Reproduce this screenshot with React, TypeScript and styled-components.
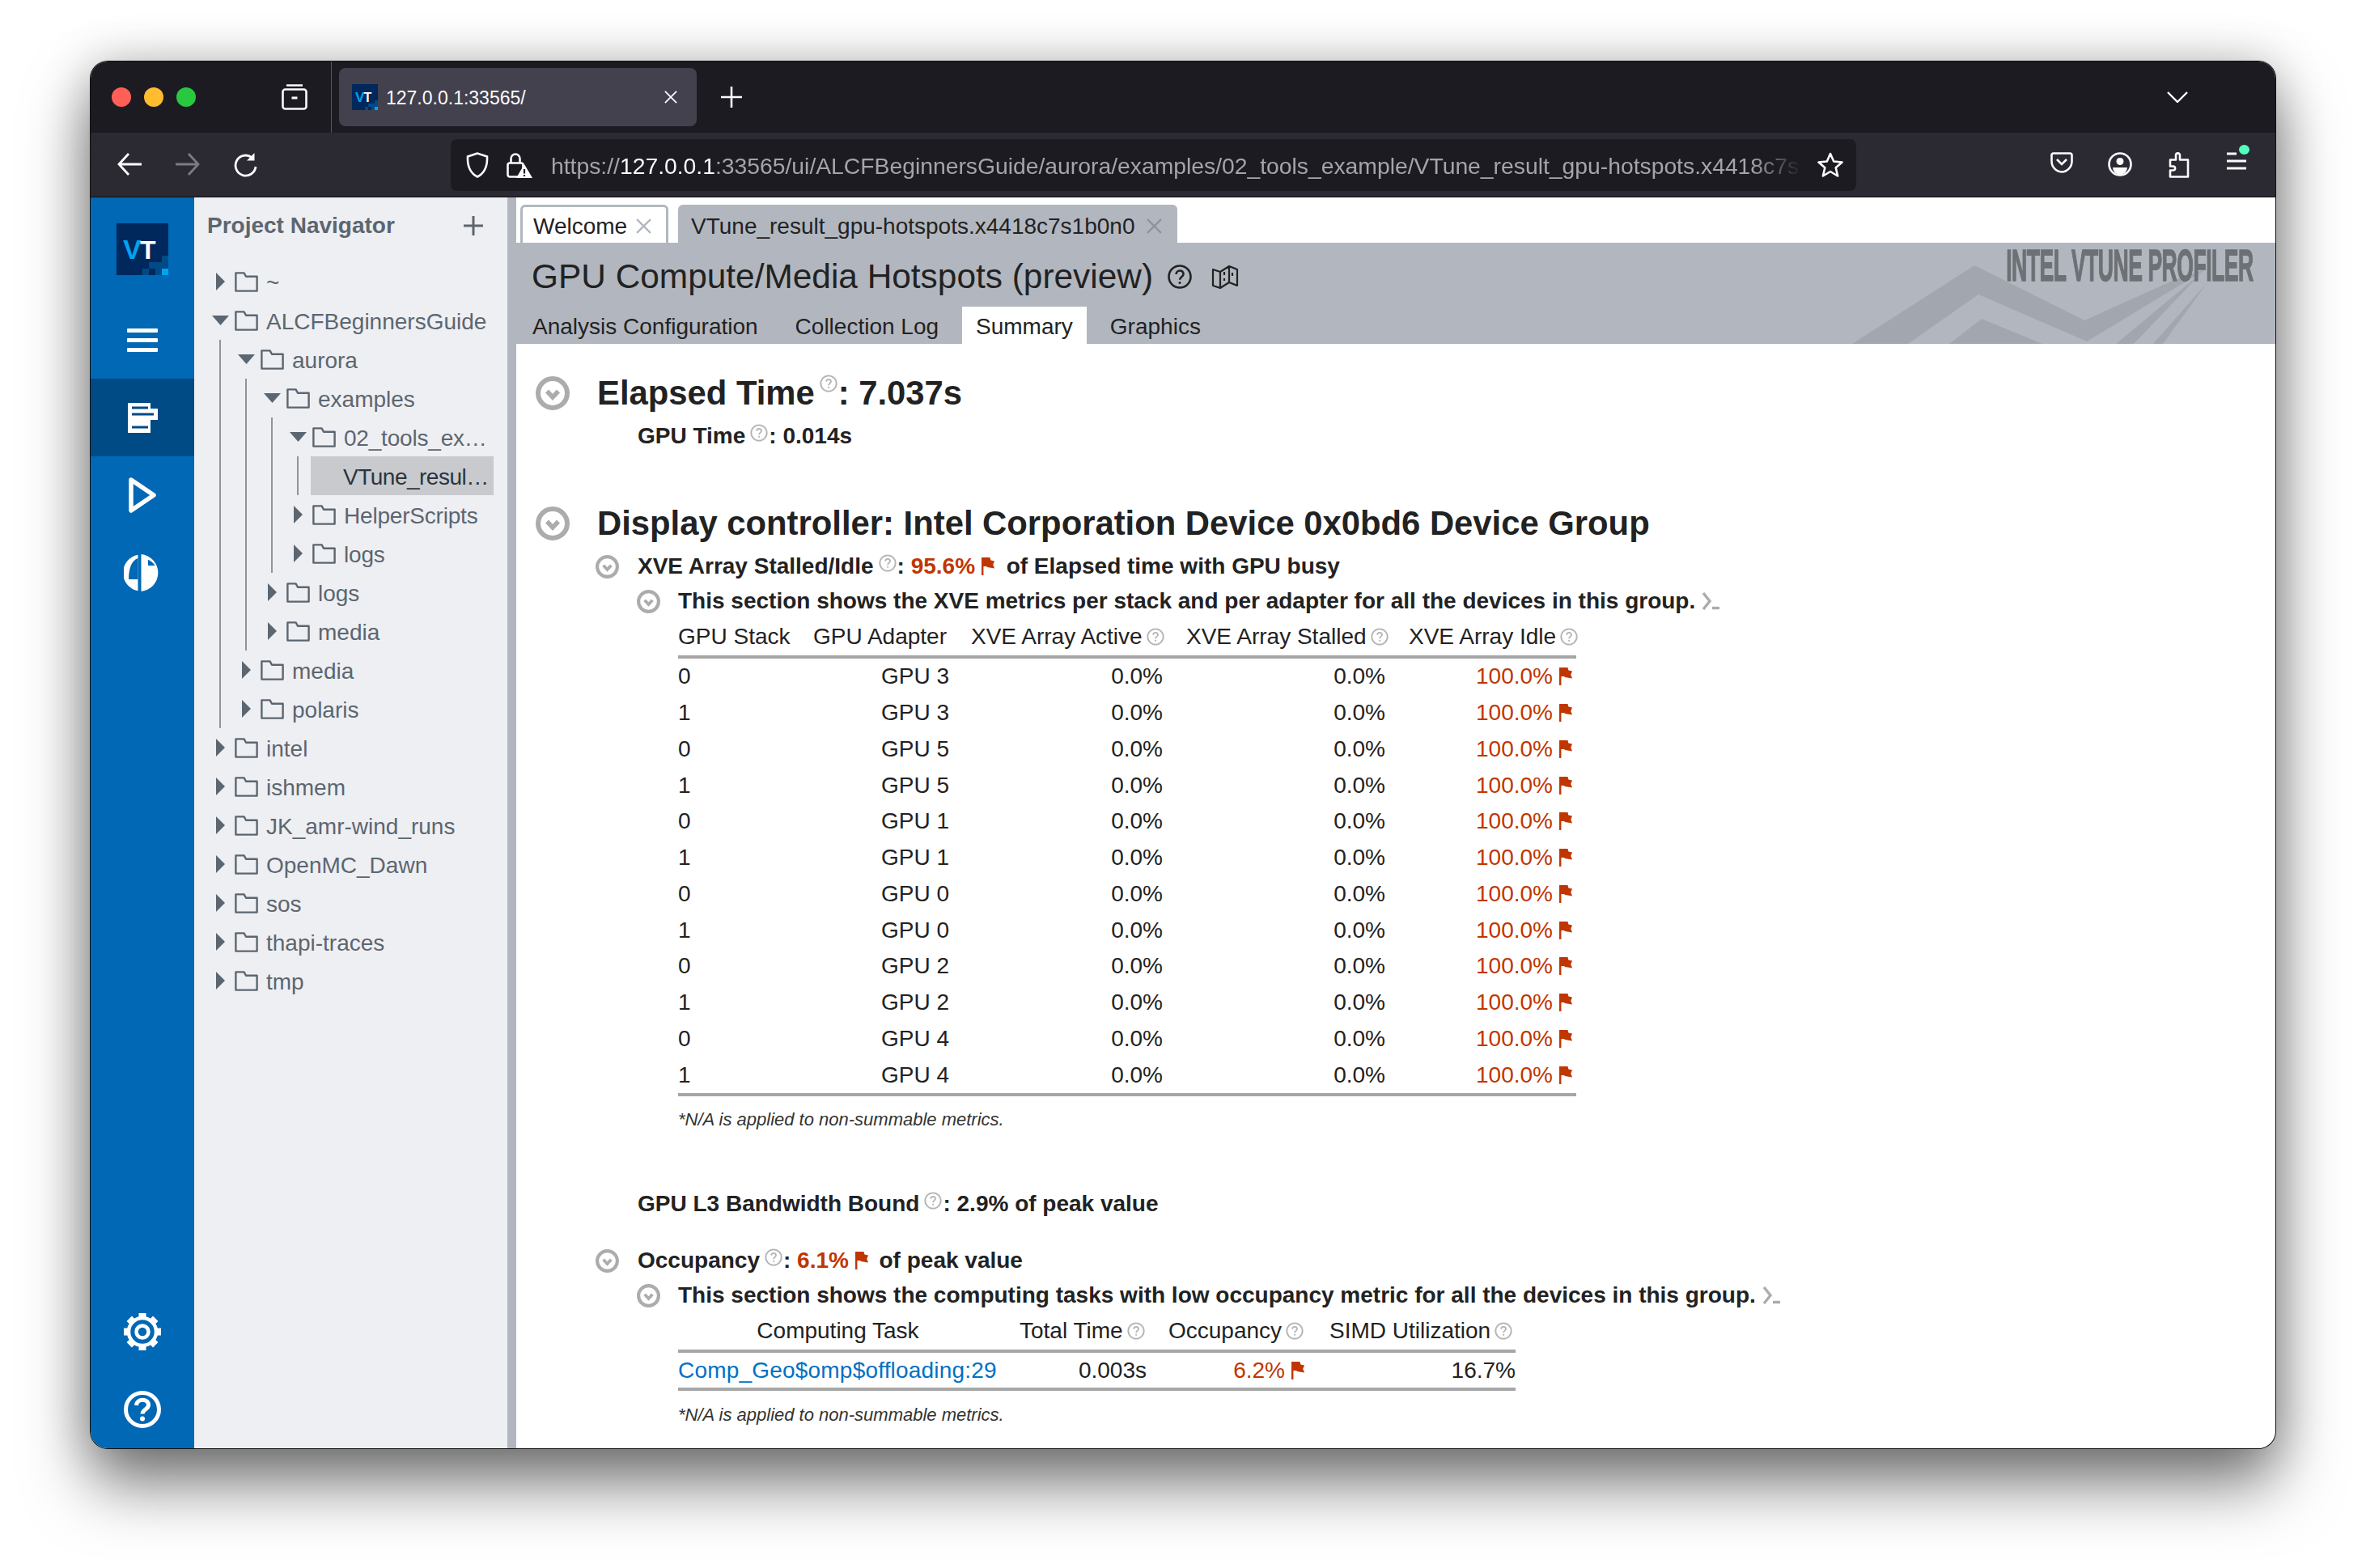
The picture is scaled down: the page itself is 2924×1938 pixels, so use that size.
import React from 'react';
import styled, { createGlobalStyle } from 'styled-components';

const Global = createGlobalStyle`
  html, body { margin: 0; padding: 0; background: #fff; }
  body { font-family: "Liberation Sans", Arial, sans-serif; color: #222; }
  * { box-sizing: border-box; }
`;

const Page = styled.div`
  width: 2924px;
  height: 1938px;
  padding: 76px 112px 148px;
  overflow: hidden;
`;

const Browser = styled.div`
  width: 2700px;
  height: 1714px;
  border-radius: 21px;
  overflow: hidden;
  display: flex;
  flex-direction: column;
  background: #fff;
  box-shadow: 0 0 0 1px #111, 0 44px 80px rgba(0, 0, 0, 0.52), 0 0 60px rgba(0, 0, 0, 0.22);
`;

/* ---------- browser chrome ---------- */
const TitleBar = styled.div`
  height: 88px;
  flex: none;
  background: #1c1b22;
  display: flex;
  align-items: center;
  padding-left: 26px;
`;

const Light = styled.span<{ $c: string }>`
  width: 24px;
  height: 24px;
  border-radius: 50%;
  background: ${p => p.$c};
  margin-right: 16px;
  flex: none;
`;

const ViewBtn = styled.div`
  width: 32px;
  margin-left: 90px;
  display: flex;
  flex: none;
`;

const TabDivider = styled.div`
  width: 1px;
  height: 88px;
  background: #55545c;
  margin-left: 29px;
`;

const BrowserTab = styled.div`
  width: 442px;
  height: 72px;
  margin-left: 9px;
  border-radius: 8px;
  background: #42414d;
  color: #fbfbfe;
  font-size: 23px;
  display: flex;
  align-items: center;
  padding-left: 16px;
  gap: 10px;
`;

const TabUrl = styled.span`
  flex: 1;
  padding-top: 2px;
`;

const CloseWrap = styled.span`
  display: flex;
  margin-right: 24px;
`;

const NewTab = styled.div`
  display: flex;
  margin-left: 30px;
`;

const Spacer = styled.div`
  flex: 1;
`;

const ListTabs = styled.div`
  display: flex;
  margin-right: 108px;
`;

const ToolBar = styled.div`
  height: 80px;
  flex: none;
  background: #2b2a33;
  border-bottom: 1px solid #0c0c0d;
  padding-top: 1px;
  display: flex;
  align-items: center;
  position: relative;
`;

const NavIcon = styled.div`
  width: 72px;
  display: flex;
  justify-content: center;
  flex: none;
`;

const NavIcons = styled.div`
  display: flex;
  margin-left: 12px;
`;

const UrlBar = styled.div`
  width: 1737px;
  height: 64px;
  margin-left: 217px;
  border-radius: 8px;
  background: #1c1b22;
  display: flex;
  align-items: center;
  padding-left: 19px;
  position: relative;
`;

const UrlIcon = styled.div<{ $mr: number }>`
  display: flex;
  margin-right: ${p => p.$mr}px;
  flex: none;
`;

const UrlText = styled.div`
  width: 1546px;
  overflow: hidden;
  white-space: nowrap;
  font-size: 28.3px;
  padding-top: 3px;
  color: #a5a4ab;
  -webkit-mask-image: linear-gradient(90deg, #000 96%, transparent 100%);
  mask-image: linear-gradient(90deg, #000 96%, transparent 100%);
  b {
    color: #fbfbfe;
    font-weight: 400;
  }
`;

const StarWrap = styled.div`
  display: flex;
  margin-left: 19px;
`;

const RightIcons = styled.div`
  display: flex;
  margin-left: 218px;
`;

const RightIcon = styled.div`
  width: 72px;
  display: flex;
  justify-content: center;
  position: relative;
`;

const UpdateDot = styled.span`
  position: absolute;
  right: 20px;
  top: -9px;
  width: 13px;
  height: 12px;
  border-radius: 50%;
  background: #54ffbd;
`;

/* ---------- app ---------- */
const AppBody = styled.div`
  flex: 1;
  display: flex;
  min-height: 0;
`;

const Rail = styled.div`
  width: 128px;
  flex: none;
  background: #0068b5;
  display: flex;
  flex-direction: column;
  padding-top: 32px;
`;

const RailLogo = styled.div`
  height: 96px;
  display: flex;
  justify-content: center;
`;

const RailBtn = styled.div<{ $active?: boolean }>`
  height: 96px;
  display: flex;
  align-items: center;
  justify-content: center;
  background: ${p => (p.$active ? '#004a86' : 'transparent')};
`;

const RailSpace = styled.div`
  flex: 1;
`;

const Navigator = styled.div`
  width: 387px;
  flex: none;
  background: #eeeff3;
  padding-left: 18px;
`;

const NavHead = styled.div`
  height: 80px;
  margin-left: -2px;
  display: flex;
  align-items: center;
  justify-content: space-between;
  padding: 3px 29px 14px 0;
  font-size: 28px;
  font-weight: 700;
  color: #5c6670;
`;

const TreeKids = styled.div`
  margin-left: 13px;
  padding-left: 17px;
  border-left: 2px solid #8e959c;
`;

const TreeRow = styled.div`
  height: 48px;
  display: flex;
  align-items: center;
  font-size: 28px;
  color: #5c6670;
  white-space: nowrap;
`;

const Arrow = styled.span`
  width: 32px;
  flex: none;
  display: flex;
  justify-content: center;
  padding-right: 4px;
`;

const FolderWrap = styled.span`
  display: flex;
  margin-right: 10px;
  flex: none;
`;

const TreeLabel = styled.span`
  width: 182px;
  padding-top: 3px;
  overflow: hidden;
  text-overflow: ellipsis;
  letter-spacing: -0.2px;
  flex: none;
`;

const PlainLabel = styled.span`
  flex: none;
  padding-top: 3px;
`;

const FileRow = styled.div`
  height: 48px;
  width: 226px;
  margin-left: -2px;
  padding-left: 40px;
  display: flex;
  align-items: center;
  font-size: 28px;
  background: #c8cace;
  color: #2b3440;
  white-space: nowrap;
  overflow: hidden;
`;

const FileLabel = styled.span`
  width: 184px;
  padding-top: 3px;
  overflow: hidden;
  text-overflow: ellipsis;
  letter-spacing: -0.5px;
`;

const Gutter = styled.div`
  width: 11px;
  flex: none;
  background: #b2b7bf;
`;

const Main = styled.div`
  flex: 1;
  min-width: 0;
  display: flex;
  flex-direction: column;
`;

const DocTabs = styled.div`
  height: 56px;
  flex: none;
  display: flex;
  padding: 9px 0 0 5px;
  gap: 12px;
`;

const DocTab = styled.div<{ $on?: boolean; $w: number; $pr: number }>`
  width: ${p => p.$w}px;
  height: 47px;
  border: 3px solid #b2b7bf;
  border-bottom: 0;
  border-radius: 6px 6px 0 0;
  background: ${p => (p.$on ? '#fff' : '#b2b7bf')};
  font-size: 28px;
  color: #222;
  display: flex;
  align-items: center;
  justify-content: space-between;
  padding: 3px ${p => p.$pr}px 0 13px;
  white-space: nowrap;
`;

const Head = styled.div`
  height: 125px;
  flex: none;
  background: #b2b7bf;
  position: relative;
  display: flex;
  flex-direction: column;
  overflow: hidden;
`;

const HeadTitle = styled.div`
  height: 79px;
  display: flex;
  align-items: center;
  padding: 5px 0 0 19px;
  font-size: 42.4px;
  color: #222;
  position: relative;
`;

const HeadIcon = styled.span<{ $ml: number }>`
  display: flex;
  margin-left: ${p => p.$ml}px;
`;

const SubTabs = styled.div`
  flex: 1;
  display: flex;
  padding-left: 3px;
  gap: 12px;
  position: relative;
`;

const SubTab = styled.div<{ $on?: boolean }>`
  padding: 4px 17px 0;
  font-size: 28px;
  color: #222;
  display: flex;
  align-items: center;
  background: ${p => (p.$on ? '#fff' : 'transparent')};
`;

const HeadArt = styled.svg`
  position: absolute;
  right: 73px;
  bottom: 0;
`;

const Brand = styled.div`
  position: absolute;
  right: 27px;
  top: 0;
  font-size: 56px;
  line-height: 56px;
  font-weight: 700;
  letter-spacing: -1px;
  color: #6d7175;
  white-space: nowrap;
  transform: scaleX(0.474);
  transform-origin: right center;
  -webkit-text-stroke: 1.5px #6d7175;
`;

const Report = styled.div`
  flex: 1;
  min-height: 0;
  padding: 31px 0 0 24px;
  overflow: hidden;
`;

const Row = styled.div<{ $h: number; $mt?: number; $ml?: number }>`
  height: ${p => p.$h}px;
  margin-top: ${p => p.$mt || 0}px;
  margin-left: ${p => p.$ml || 0}px;
  display: flex;
  align-items: center;
  white-space: pre;
`;

const Toggle = styled.span<{ $w: number }>`
  width: ${p => p.$w}px;
  flex: none;
  display: flex;
`;

const BigText = styled.span`
  font-size: 41.8px;
  font-weight: 700;
  color: #222;
`;

const BoldText = styled.span`
  font-size: 28px;
  font-weight: 700;
  color: #222;
  display: flex;
  align-items: center;
`;

const Sup = styled.span<{ $up?: number; $ml?: number }>`
  display: inline-flex;
  margin: 0 1px 0 ${p => p.$ml ?? 6}px;
  transform: translateY(${p => -(p.$up || 0)}px);
`;

const Red = styled.span`
  color: #c03600;
`;

const FlagWrap = styled.span<{ $ml?: number; $mr?: number }>`
  display: inline-flex;
  margin-left: ${p => p.$ml ?? 8}px;
  margin-right: ${p => p.$mr ?? 0}px;
`;

const Grid = styled.div<{ $cols: string; $ml: number }>`
  display: grid;
  grid-template-columns: ${p => p.$cols};
  column-gap: 27px;
  margin-left: ${p => p.$ml}px;
  font-size: 28px;
  color: #222;
`;

const HeadRow = styled(Grid)<{ $w: number }>`
  width: ${p => p.$w}px;
  height: 47px;
  align-items: center;
  white-space: nowrap;
`;

const Rule = styled.div<{ $w: number; $ml: number }>`
  width: ${p => p.$w}px;
  height: 4px;
  margin-left: ${p => p.$ml}px;
  background: #a6a6a6;
`;

const BodyRow = styled(Grid)<{ $w: number; $h: number }>`
  width: ${p => p.$w}px;
  height: ${p => p.$h}px;
  align-items: center;
  white-space: nowrap;
`;

const Cell = styled.div<{ $a?: string; $red?: boolean; $pr?: number }>`
  display: flex;
  align-items: center;
  justify-content: ${p => (p.$a === 'r' ? 'flex-end' : p.$a === 'c' ? 'center' : 'flex-start')};
  color: ${p => (p.$red ? '#c03600' : 'inherit')};
  padding-right: ${p => p.$pr || 0}px;
`;

const TaskLink = styled.span`
  color: #0071c5;
  letter-spacing: 0.2px;
`;

const Note = styled.div<{ $mt: number }>`
  height: 30px;
  margin: ${p => p.$mt}px 0 0 176px;
  font-size: 22px;
  font-style: italic;
  color: #333;
  display: flex;
  align-items: center;
`;

/* ---------- drawings ---------- */
const CloseX = ({ s = 18, c = '#fbfbfe', w = 2 }: { s?: number; c?: string; w?: number }) => (
  <svg width={s} height={s} viewBox="0 0 18 18" fill="none" stroke={c} strokeWidth={w}>
    <path d="M1 1l16 16M17 1L1 17" />
  </svg>
);

const Help = ({ s = 22 }: { s?: number }) => (
  <svg width={s} height={s} viewBox="0 0 20 20" fill="none" stroke="#b4b4b4" strokeWidth="1.7">
    <circle cx="10" cy="10" r="8.8" />
    <path d="M7.4 7.8c.2-3.3 5.3-3.3 5.3-.1 0 2-2.6 2-2.6 4.4" />
    <circle cx="10.1" cy="14.4" r="1" fill="#b4b4b4" stroke="none" />
  </svg>
);

const Collapse = ({ s }: { s: number }) => (
  <svg width={s} height={s} viewBox="0 0 42 42" fill="none">
    <circle cx="21" cy="21" r="18" stroke="#acacac" strokeWidth="6" />
    <path d="M14 18.500l7 7.500 7-7.500" stroke="#acacac" strokeWidth="5.500" />
  </svg>
);

const Flag = ({ s = 22 }: { s?: number }) => (
  <svg width={s * 0.73} height={s} viewBox="0 0 16 22">
    <path d="M0 0h2.400v22H0zM2.400 0h8l1 3.400L16 4.400 14.200 9l1.800 4.400-9-1.400-1-1H2.400z" fill="#c03600" />
  </svg>
);

const Prompt = () => (
  <svg width="22" height="22" viewBox="0 0 22 22" fill="none">
    <path d="M2 1l8 10-8 10" stroke="#acacac" strokeWidth="3.400" />
    <path d="M13 19.500h9" stroke="#acacac" strokeWidth="3.400" />
  </svg>
);

const Folder = () => (
  <svg width="29" height="25" viewBox="0 0 29 25" fill="none" stroke="#5c6670" strokeWidth="2.400">
    <path d="M1.400 23.600V1.400h10.200l2.400 4.400h13.600v17.800z" strokeLinejoin="round" />
  </svg>
);

const TriRight = () => (
  <svg width="11" height="22" viewBox="0 0 11 22">
    <path d="M0 0l11 11L0 22z" fill="#5c6670" />
  </svg>
);

const TriDown = () => (
  <svg width="21" height="12" viewBox="0 0 21 12">
    <path d="M0 0h21L10.500 12z" fill="#5c6670" />
  </svg>
);

const VtLogo = ({ s }: { s: number }) => (
  <svg width={s} height={s} viewBox="0 0 64 64">
    <rect width="64" height="64" fill="#00285c" />
    <text x="8" y="44" fontFamily="Liberation Sans" fontWeight="700" fontSize="34" fill="#00a4f0">V</text>
    <text x="29" y="44" fontFamily="Liberation Sans" fontWeight="700" fontSize="32" fill="#fff">T</text>
    <path d="M40 48h16v-8h8v16h-24z" fill="#004a86" />
    <rect x="32" y="56" width="8" height="8" fill="#004a86" />
    <rect x="48" y="56" width="8" height="8" fill="#004a86" />
    <rect x="56" y="56" width="8" height="8" fill="#00a4f0" />
  </svg>
);

const Gear = () => {
  const teeth = [0, 45, 90, 135, 180, 225, 270, 315];
  return (
    <svg width="46" height="46" viewBox="0 0 46 46" fill="none">
      {teeth.map(a => (
        <rect key={a} x="18.500" y="0" width="9" height="8" fill="#fff" transform={`rotate(${a} 23 23)`} />
      ))}
      <circle cx="23" cy="23" r="17" stroke="#fff" strokeWidth="4.500" />
      <circle cx="23" cy="23" r="7.500" stroke="#fff" strokeWidth="4.500" />
    </svg>
  );
};

type Node = { name: string; kids?: Node[]; file?: boolean };

const tree: Node[] = [
  { name: '~' },
  {
    name: 'ALCFBeginnersGuide',
    kids: [
      {
        name: 'aurora',
        kids: [
          {
            name: 'examples',
            kids: [
              {
                name: '02_tools_example',
                kids: [{ name: 'VTune_result_gpu-hotspots.x4418c7s1b0n0', file: true }],
              },
              { name: 'HelperScripts', kids: [] },
              { name: 'logs', kids: [] },
            ],
          },
          { name: 'logs', kids: [] },
          { name: 'media', kids: [] },
        ],
      },
      { name: 'media', kids: [] },
      { name: 'polaris', kids: [] },
    ],
  },
  { name: 'intel' },
  { name: 'ishmem' },
  { name: 'JK_amr-wind_runs' },
  { name: 'OpenMC_Dawn' },
  { name: 'sos' },
  { name: 'thapi-traces' },
  { name: 'tmp' },
];

function TreeNode({ node, depth }: { node: Node; depth: number }) {
  if (node.file) {
    return (
      <FileRow>
        <FileLabel>{node.name}</FileLabel>
      </FileRow>
    );
  }
  const open = node.kids && node.kids.length > 0;
  return (
    <>
      <TreeRow>
        <Arrow>{open ? <TriDown /> : <TriRight />}</Arrow>
        <FolderWrap>
          <Folder />
        </FolderWrap>
        {depth === 3 ? <TreeLabel>{node.name}</TreeLabel> : <PlainLabel>{node.name}</PlainLabel>}
      </TreeRow>
      {open && (
        <TreeKids>
          {node.kids!.map((k, i) => (
            <TreeNode key={i} node={k} depth={depth + 1} />
          ))}
        </TreeKids>
      )}
    </>
  );
}

const gpuRows: [string, string][] = [
  ['0', 'GPU 3'],
  ['1', 'GPU 3'],
  ['0', 'GPU 5'],
  ['1', 'GPU 5'],
  ['0', 'GPU 1'],
  ['1', 'GPU 1'],
  ['0', 'GPU 0'],
  ['1', 'GPU 0'],
  ['0', 'GPU 2'],
  ['1', 'GPU 2'],
  ['0', 'GPU 4'],
  ['1', 'GPU 4'],
];

const XVE_COLS = '140px 168px 239px 248px 207px';
const TASK_COLS = '395px 157px 172px 230px';

function App() {
  return (
    <Page>
      <Global />
      <Browser>
        <TitleBar>
          <Light $c="#ff5f57" />
          <Light $c="#febc2e" />
          <Light $c="#28c840" />
          <ViewBtn>
            <svg width="32" height="32" viewBox="0 0 32 32" fill="none" stroke="#fbfbfe" strokeWidth="2.600">
              <rect x="1.500" y="6.500" width="29" height="24" rx="3" />
              <path d="M6 1.500h20" />
              <path d="M12.500 17h7" strokeWidth="3" />
            </svg>
          </ViewBtn>
          <TabDivider />
          <BrowserTab>
            <VtLogo s={32} />
            <TabUrl>127.0.0.1:33565/</TabUrl>
            <CloseWrap>
              <CloseX s={16} />
            </CloseWrap>
          </BrowserTab>
          <NewTab>
            <svg width="26" height="26" viewBox="0 0 26 26" stroke="#fbfbfe" strokeWidth="2.600">
              <path d="M13 0v26M0 13h26" />
            </svg>
          </NewTab>
          <Spacer />
          <ListTabs>
            <svg width="26" height="14" viewBox="0 0 26 14" fill="none" stroke="#fbfbfe" strokeWidth="2.400">
              <path d="M1 1l12 12L25 1" />
            </svg>
          </ListTabs>
        </TitleBar>

        <ToolBar>
          <NavIcons>
            <NavIcon>
              <svg width="30" height="28" viewBox="0 0 30 28" fill="none" stroke="#fbfbfe" strokeWidth="2.800">
                <path d="M14 1L2 14l12 13M2 14h28" />
              </svg>
            </NavIcon>
            <NavIcon>
              <svg width="30" height="28" viewBox="0 0 30 28" fill="none" stroke="#7c7b82" strokeWidth="2.800">
                <path d="M16 1l12 13-12 13M28 14H0" />
              </svg>
            </NavIcon>
            <NavIcon>
              <svg width="30" height="30" viewBox="0 0 30 30" fill="none" stroke="#fbfbfe" strokeWidth="2.800">
                <path d="M27 17a12.500 12.500 0 1 1-5-11.500" />
                <path d="M25.500 0v9.500h-9.500z" fill="#fbfbfe" stroke="none" />
              </svg>
            </NavIcon>
          </NavIcons>
          <UrlBar>
            <UrlIcon $mr={22}>
              <svg width="28" height="32" viewBox="0 0 28 32" fill="none" stroke="#fbfbfe" strokeWidth="2.600">
                <path d="M14 1.500L2 5.500c-.5 11 2 20 12 25 10-5 12.500-14 12-25z" />
              </svg>
            </UrlIcon>
            <UrlIcon $mr={23}>
              <svg width="32" height="32" viewBox="0 0 32 32" fill="none">
                <rect x="1.500" y="13.500" width="19" height="17" rx="2.500" stroke="#fbfbfe" strokeWidth="2.600" />
                <path d="M5.500 13V8a5.500 5.500 0 0 1 11 0v5" stroke="#fbfbfe" strokeWidth="2.600" />
                <path d="M22 15l10 17H12z" fill="#fbfbfe" />
                <path d="M22 21v5.500M22 28v2" stroke="#1c1b22" strokeWidth="2.200" />
              </svg>
            </UrlIcon>
            <UrlText>
              https://<b>127.0.0.1</b>:33565/ui/ALCFBeginnersGuide/aurora/examples/02_tools_example/VTune_result_gpu-hotspots.x4418c7s1b0n0
            </UrlText>
            <StarWrap>
              <svg width="32" height="32" viewBox="0 0 32 32" fill="none" stroke="#fbfbfe" strokeWidth="2.600" strokeLinejoin="round">
                <path d="M16 2l4.200 9.500 10.300 1-7.800 6.800 2.400 10.200L16 24l-9.100 5.500 2.400-10.200-7.800-6.800 10.300-1z" />
              </svg>
            </StarWrap>
          </UrlBar>
          <RightIcons>
            <RightIcon>
              <svg width="28" height="26" viewBox="0 0 28 26" fill="none" stroke="#fbfbfe" strokeWidth="2.600">
                <path d="M3.500 1.500h21c1 0 2 1 2 2v8c0 7-6 13-12.500 13S1.500 18.500 1.500 11.500v-8c0-1 1-2 2-2z" />
                <path d="M8 9l6 6 6-6" />
              </svg>
            </RightIcon>
            <RightIcon>
              <svg width="30" height="30" viewBox="0 0 30 30" fill="none">
                <circle cx="15" cy="15" r="13.500" stroke="#fbfbfe" strokeWidth="2.600" />
                <circle cx="15" cy="11.500" r="4.500" fill="#fbfbfe" />
                <path d="M6 19h18a9 9 0 0 1-18 0z" fill="#fbfbfe" />
              </svg>
            </RightIcon>
            <RightIcon>
              <svg width="27" height="32" viewBox="0 0 27 32" fill="none" stroke="#fbfbfe" strokeWidth="2.600" strokeLinejoin="round">
                <path d="M15 9.500V4c0-3.500-5-3.500-5 0v5.500H3v8h3.500c3.500 0 3.500 5 0 5H3v8h22v-21z" />
              </svg>
            </RightIcon>
            <RightIcon>
              <svg width="26" height="22" viewBox="0 0 26 22" stroke="#fbfbfe" strokeWidth="2.800">
                <path d="M1 2h12M1 11h24M1 20h24" />
              </svg>
              <UpdateDot />
            </RightIcon>
          </RightIcons>
        </ToolBar>

        <AppBody>
          <Rail>
            <RailLogo>
              <VtLogo s={64} />
            </RailLogo>
            <RailBtn>
              <svg width="38" height="32" viewBox="0 0 38 32" fill="#fff">
                <rect y="2" width="38" height="5" rx="1" />
                <rect y="14" width="38" height="5" rx="1" />
                <rect y="26" width="38" height="5" rx="1" />
              </svg>
            </RailBtn>
            <RailBtn $active>
              <svg width="37" height="37" viewBox="0 0 37 37">
                <path d="M0 0h28v7h9v14h-9v16H0z" fill="#fff" />
                <path d="M5 4.500h20v3H5zM5 12.500h27v3H5zM5 28.500h20v3H5z" fill="#004a86" />
              </svg>
            </RailBtn>
            <RailBtn>
              <svg width="34" height="44" viewBox="0 0 34 44" fill="none" stroke="#fff" strokeWidth="5.500" strokeLinejoin="round">
                <path d="M3 3l28 19L3 41z" />
              </svg>
            </RailBtn>
            <RailBtn>
              <svg width="46" height="46" viewBox="0 0 46 46">
                <path d="M17.500.7A22.700 22.700 0 0 0 17.500 45.300z" fill="#fff" />
                <path d="M21.500.1A23 23 0 0 1 21.500 45.900z" fill="#fff" />
                <path d="M17.500 5C11 7 6 15 6 31h11.500z" fill="#0068b5" />
                <path d="M30 6.700V14h8.500C36.500 11 33.500 8 30 6.700z" fill="#0068b5" />
              </svg>
            </RailBtn>
            <RailSpace />
            <RailBtn>
              <Gear />
            </RailBtn>
            <RailBtn>
              <svg width="46" height="46" viewBox="0 0 46 46" fill="none" stroke="#fff" strokeWidth="5">
                <circle cx="23" cy="23" r="20.500" />
                <path d="M15.500 18c.5-9 15-9 15-.5 0 5.500-7.500 5.500-7.500 11" />
                <circle cx="23" cy="34.500" r="3" fill="#fff" stroke="none" />
              </svg>
            </RailBtn>
          </Rail>

          <Navigator>
            <NavHead>
              Project Navigator
              <svg width="26" height="26" viewBox="0 0 26 26" stroke="#5c6670" strokeWidth="3">
                <path d="M13 1v24M1 13h24" />
              </svg>
            </NavHead>
            {tree.map((n, i) => (
              <TreeNode key={i} node={n} depth={0} />
            ))}
          </Navigator>
          <Gutter />

          <Main>
            <DocTabs>
              <DocTab $on $w={183} $pr={18}>
                Welcome
                <CloseX s={19} c="#b2b7bf" w={2.2} />
              </DocTab>
              <DocTab $w={617} $pr={16}>
                VTune_result_gpu-hotspots.x4418c7s1b0n0
                <CloseX s={19} c="#8e939b" w={2.2} />
              </DocTab>
            </DocTabs>

            <Head>
              <HeadArt width="460" height="125" viewBox="2280 301 460 125" fill="#a2a7af">
                <path d="M2290 426L2441 329 2577 397 2688 347 2729 333 2580 423 2446 365 2359 426z" />
                <path d="M2410 426L2450 395 2525 426z" />
                <path d="M2616 426L2723 337 2638 426zM2662 426L2729 350 2674 426z" />
              </HeadArt>
              <Brand>INTEL VTUNE PROFILER</Brand>
              <HeadTitle>
                GPU Compute/Media Hotspots (preview)
                <HeadIcon $ml={18}>
                  <svg width="30" height="30" viewBox="0 0 30 30" fill="none" stroke="#222" strokeWidth="2.600">
                    <circle cx="15" cy="15" r="13.500" />
                    <path d="M10.500 12c.3-6 9-6 9-.3 0 3.500-4.500 3.500-4.500 7" />
                    <circle cx="15" cy="22.500" r="1.500" fill="#222" stroke="none" />
                  </svg>
                </HeadIcon>
                <HeadIcon $ml={24}>
                  <svg width="34" height="30" viewBox="0 0 34 30" fill="none" stroke="#222" strokeWidth="2.200">
                    <path d="M2 6l9 3v20l-9-3zM11 9l11-7v20l-11 7zM22 2l10 4v20l-10-4z" strokeLinejoin="round" />
                    <path d="M26 10v4M16 9v4M16 17v3" />
                  </svg>
                </HeadIcon>
              </HeadTitle>
              <SubTabs>
                <SubTab>Analysis Configuration</SubTab>
                <SubTab>Collection Log</SubTab>
                <SubTab $on>Summary</SubTab>
                <SubTab>Graphics</SubTab>
              </SubTabs>
            </Head>

            <Report>
              <Row $h={60}>
                <Toggle $w={76}>
                  <Collapse s={42} />
                </Toggle>
                <BigText>Elapsed Time</BigText>
                <Sup $up={12}>
                  <Help s={22} />
                </Sup>
                <BigText>: 7.037s</BigText>
              </Row>
              <Row $h={46} $ml={126}>
                <BoldText>
                  GPU Time
                  <Sup $up={4}>
                    <Help />
                  </Sup>
                  : 0.014s
                </BoldText>
              </Row>
              <Row $h={60} $mt={55}>
                <Toggle $w={76}>
                  <Collapse s={42} />
                </Toggle>
                <BigText>Display controller: Intel Corporation Device 0x0bd6 Device Group</BigText>
              </Row>
              <Row $h={46} $ml={74}>
                <Toggle $w={52}>
                  <Collapse s={29} />
                </Toggle>
                <BoldText>
                  XVE Array Stalled/Idle
                  <Sup $up={4}>
                    <Help />
                  </Sup>
                  : <Red>95.6%</Red>
                  <FlagWrap $mr={-1}>
                    <Flag />
                  </FlagWrap>
                  {'  of Elapsed time with GPU busy'}
                </BoldText>
              </Row>
              <Row $h={40} $ml={125}>
                <Toggle $w={51}>
                  <Collapse s={29} />
                </Toggle>
                <BoldText>
                  {'This section shows the XVE metrics per stack and per adapter for all the devices in this group. '}
                  <Prompt />
                </BoldText>
              </Row>

              <HeadRow $cols={XVE_COLS} $ml={176} $w={1110}>
                <Cell>GPU Stack</Cell>
                <Cell>GPU Adapter</Cell>
                <Cell>
                  XVE Array Active
                  <Sup $ml={5}>
                    <Help />
                  </Sup>
                </Cell>
                <Cell>
                  XVE Array Stalled
                  <Sup $ml={5}>
                    <Help />
                  </Sup>
                </Cell>
                <Cell>
                  XVE Array Idle
                  <Sup $ml={5}>
                    <Help />
                  </Sup>
                </Cell>
              </HeadRow>
              <Rule $w={1110} $ml={176} />
              {gpuRows.map(([stack, gpu], i) => (
                <BodyRow key={i} $cols={XVE_COLS} $ml={176} $w={1110} $h={44.75}>
                  <Cell>{stack}</Cell>
                  <Cell $a="r">{gpu}</Cell>
                  <Cell $a="r" $pr={2}>0.0%</Cell>
                  <Cell $a="r" $pr={2}>0.0%</Cell>
                  <Cell $a="r" $red $pr={5}>
                    100.0%
                    <FlagWrap>
                      <Flag s={22} />
                    </FlagWrap>
                  </Cell>
                </BodyRow>
              ))}
              <Rule $w={1110} $ml={176} />
              <Note $mt={14}>*N/A is applied to non-summable metrics.</Note>

              <Row $h={46} $mt={66} $ml={126}>
                <BoldText>
                  GPU L3 Bandwidth Bound
                  <Sup $up={4}>
                    <Help />
                  </Sup>
                  : 2.9% of peak value
                </BoldText>
              </Row>
              <Row $h={46} $mt={24} $ml={74}>
                <Toggle $w={52}>
                  <Collapse s={29} />
                </Toggle>
                <BoldText>
                  Occupancy
                  <Sup $up={4}>
                    <Help />
                  </Sup>
                  : <Red>6.1%</Red>
                  <FlagWrap $mr={-2}>
                    <Flag />
                  </FlagWrap>
                  {'  of peak value'}
                </BoldText>
              </Row>
              <Row $h={40} $ml={125}>
                <Toggle $w={51}>
                  <Collapse s={29} />
                </Toggle>
                <BoldText>
                  {'This section shows the computing tasks with low occupancy metric for all the devices in this group. '}
                  <Prompt />
                </BoldText>
              </Row>

              <HeadRow $cols={TASK_COLS} $ml={176} $w={1035}>
                <Cell $a="c">Computing Task</Cell>
                <Cell>
                  Total Time
                  <Sup $ml={5}>
                    <Help />
                  </Sup>
                </Cell>
                <Cell>
                  Occupancy
                  <Sup $ml={5}>
                    <Help />
                  </Sup>
                </Cell>
                <Cell>
                  SIMD Utilization
                  <Sup $ml={5}>
                    <Help />
                  </Sup>
                </Cell>
              </HeadRow>
              <Rule $w={1035} $ml={176} />
              <BodyRow $cols={TASK_COLS} $ml={176} $w={1035} $h={43}>
                <Cell>
                  <TaskLink>Comp_Geo$omp$offloading:29</TaskLink>
                </Cell>
                <Cell $a="r">0.003s</Cell>
                <Cell $a="r" $red $pr={4}>
                  6.2%
                  <FlagWrap>
                    <Flag s={22} />
                  </FlagWrap>
                </Cell>
                <Cell $a="r">16.7%</Cell>
              </BodyRow>
              <Rule $w={1035} $ml={176} />
              <Note $mt={15}>*N/A is applied to non-summable metrics.</Note>
            </Report>
          </Main>
        </AppBody>
      </Browser>
    </Page>
  );
}

export default App;
